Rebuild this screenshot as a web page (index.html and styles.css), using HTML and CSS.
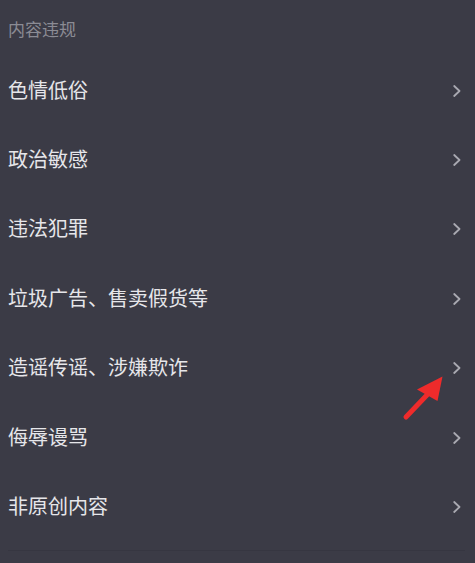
FILE: index.html
```html
<!DOCTYPE html>
<html lang="zh-CN">
<head>
<meta charset="utf-8">
<title>内容违规</title>
<link rel="stylesheet" href="styles.css">
</head>
<body>
<div class="page">
  <section class="section">
    <div class="section-title">内容违规</div>
    <ul class="list">
      <li class="row"><span class="label">色情低俗</span><svg class="chev" viewBox="0 0 8 12"><path d="M1.2 1 L6.5 6 L1.2 11"/></svg></li>
      <li class="row"><span class="label">政治敏感</span><svg class="chev" viewBox="0 0 8 12"><path d="M1.2 1 L6.5 6 L1.2 11"/></svg></li>
      <li class="row"><span class="label">违法犯罪</span><svg class="chev" viewBox="0 0 8 12"><path d="M1.2 1 L6.5 6 L1.2 11"/></svg></li>
      <li class="row"><span class="label">垃圾广告、售卖假货等</span><svg class="chev" viewBox="0 0 8 12"><path d="M1.2 1 L6.5 6 L1.2 11"/></svg></li>
      <li class="row"><span class="label">造谣传谣、涉嫌欺诈</span><svg class="chev" viewBox="0 0 8 12"><path d="M1.2 1 L6.5 6 L1.2 11"/></svg></li>
      <li class="row"><span class="label">侮辱谩骂</span><svg class="chev" viewBox="0 0 8 12"><path d="M1.2 1 L6.5 6 L1.2 11"/></svg></li>
      <li class="row"><span class="label">非原创内容</span><svg class="chev" viewBox="0 0 8 12"><path d="M1.2 1 L6.5 6 L1.2 11"/></svg></li>
    </ul>
    <div class="divider"></div>
  </section>
  <svg class="annot-arrow" viewBox="398 368 52 56">
    <line x1="427" y1="395" x2="406" y2="417" />
    <polygon points="442.5,376.5 417,389.5 437.5,401" />
  </svg>
</div>
</body>
</html>
```
FILE: styles.css
```css
html, body {
  margin: 0;
  padding: 0;
  background: #3b3b46;
}
body {
  font-family: "Noto Sans CJK SC", "Noto Sans", sans-serif;
  width: 475px;
  height: 563px;
  overflow: hidden;
}
.page {
  position: relative;
  width: 475px;
  height: 563px;
}
.section {
  padding: 0 10px 0 8px;
}
.section-title {
  height: 55px;
  box-sizing: border-box;
  padding-top: 19px;
  font-size: 17px;
  line-height: 20px;
  color: #8b8b94;
}
.list {
  list-style: none;
  margin: 0;
  padding: 0;
}
.row {
  height: 69.4px;
  display: flex;
  align-items: center;
  justify-content: space-between;
}
.label {
  font-size: 20px;
  line-height: 24px;
  color: #e6e6ea;
}
.chev {
  width: 8px;
  height: 12px;
  margin-right: 4px;
  margin-top: 2px;
  fill: none;
  stroke: #a9a9b1;
  stroke-width: 1.8;
  stroke-linecap: round;
  stroke-linejoin: round;
}
.divider {
  margin-top: 9px;
  height: 1px;
  background: #363641;
}
.annot-arrow {
  position: absolute;
  left: 398px;
  top: 368px;
  width: 52px;
  height: 56px;
}
.annot-arrow line {
  stroke: #ee2b2b;
  stroke-width: 5;
  stroke-linecap: round;
}
.annot-arrow polygon {
  fill: #ee2b2b;
}
```
